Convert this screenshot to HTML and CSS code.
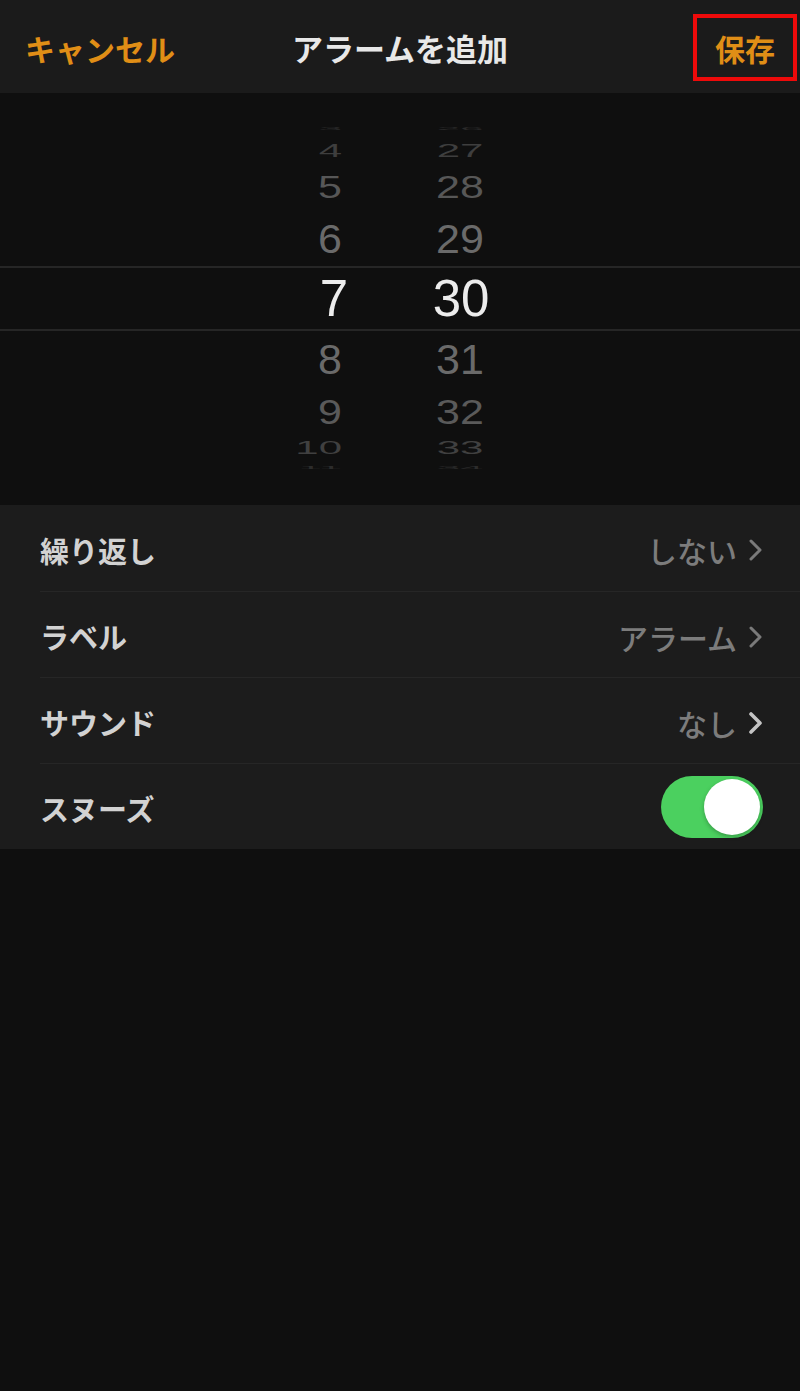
FILE: index.html
```html
<!DOCTYPE html>
<html lang="ja">
<head>
<meta charset="utf-8">
<title>アラームを追加</title>
<link rel="stylesheet" href="styles.css">
</head>
<body>
<header class="nav">
  <span class="nav-cancel">キャンセル</span>
  <span class="nav-title">アラームを追加</span>
  <span class="nav-save">保存</span>
</header>

<section class="picker">
  <div class="prow r0"><span class="h"><i>3</i></span><span class="m"><i>26</i></span></div>
  <div class="prow r1"><span class="h"><i>4</i></span><span class="m"><i>27</i></span></div>
  <div class="prow r2"><span class="h"><i>5</i></span><span class="m"><i>28</i></span></div>
  <div class="prow r3"><span class="h"><i>6</i></span><span class="m"><i>29</i></span></div>
  <div class="prow sel"><span class="h"><i>7</i></span><span class="m"><i>30</i></span></div>
  <div class="prow r5"><span class="h"><i>8</i></span><span class="m"><i>31</i></span></div>
  <div class="prow r6"><span class="h"><i>9</i></span><span class="m"><i>32</i></span></div>
  <div class="prow r7"><span class="h"><i>10</i></span><span class="m"><i>33</i></span></div>
  <div class="prow r8"><span class="h"><i>11</i></span><span class="m"><i>34</i></span></div>
</section>

<section class="list">
  <div class="row">
    <span class="label">繰り返し</span>
    <span class="value">しない<svg class="chev" width="14" height="22" viewBox="0 0 14 22"><polyline points="2,2 11,11 2,20" fill="none" stroke="currentColor" stroke-width="3" stroke-linecap="round" stroke-linejoin="round"/></svg></span>
  </div>
  <div class="row">
    <span class="label">ラベル</span>
    <span class="value">アラーム<svg class="chev" width="14" height="22" viewBox="0 0 14 22"><polyline points="2,2 11,11 2,20" fill="none" stroke="currentColor" stroke-width="3" stroke-linecap="round" stroke-linejoin="round"/></svg></span>
  </div>
  <div class="row">
    <span class="label">サウンド</span>
    <span class="value">なし<svg class="chev chev-strong" width="14" height="22" viewBox="0 0 14 22"><polyline points="2,2 11,11 2,20" fill="none" stroke="currentColor" stroke-width="3.6" stroke-linecap="round" stroke-linejoin="round"/></svg></span>
  </div>
  <div class="row">
    <span class="label">スヌーズ</span>
    <span class="toggle"><span class="knob"></span></span>
  </div>
</section>
</body>
</html>
```

FILE: styles.css
```css
html, body {
  margin: 0;
  padding: 0;
  background: #0f0f0f;
}
body {
  width: 800px;
  min-height: 1391px;
  font-family: "Noto Sans CJK JP", "Noto Sans", sans-serif;
  color: #e6e6e6;
}

/* header */
.nav {
  height: 93px;
  box-sizing: border-box;
  padding: 2px 3px 0 3px;
  background: #1b1b1b;
  display: grid;
  grid-template-columns: 1fr auto 1fr;
  align-items: center;
  font-size: 30px;
  font-weight: 700;
  line-height: 1;
}
.nav-cancel {
  justify-self: start;
  margin-left: 22px;
  color: #e08e16;
}
.nav-title {
  justify-self: center;
  color: #e8e8e8;
  font-size: 31px;
}
.nav-save {
  justify-self: end;
  color: #e08e16;
  border: 4px solid #ee0a0a;
  height: 67px;
  box-sizing: border-box;
  padding: 0 18px;
  display: flex;
  align-items: center;
}

/* picker */
.picker {
  height: 412px;
  box-sizing: border-box;
  padding-top: 25px;
  background: #0f0f0f;
  font-family: "Liberation Sans", Arial, sans-serif;
  overflow: hidden;
}
.prow {
  display: flex;
  align-items: center;
  box-sizing: border-box;
  font-size: 43px;
  line-height: 1;
}
.prow .h {
  width: 342px;
  text-align: right;
  flex: none;
}
.prow .m {
  width: 236px;
  text-align: center;
  flex: none;
}
.prow i {
  font-style: normal;
  display: inline-block;
}
.r0 { height: 21px; color: #2a2a2a; font-size: 42px; }
.r0 i { transform: scaleY(0.1); }
.r1 { height: 23px; color: #3e3e3e; font-size: 42px; }
.r1 i { transform: scaleY(0.45); }
.r2 { height: 50px; color: #575757; }
.r2 i { transform: scaleY(0.75); }
.r3 { height: 54px; color: #6a6a6a; }
.r3 i { transform: scaleY(0.95); }
.sel {
  height: 65px;
  border-top: 2px solid #262626;
  border-bottom: 2px solid #262626;
  color: #ececec;
  font-size: 51px;
}
.sel .h { width: 348px; }
.sel .m { width: 226px; }
.r5 { height: 57px; color: #6a6a6a; }
.r5 i { transform: scaleY(0.97); }
.r6 { height: 48px; color: #5a5a5a; }
.r6 i { transform: scaleY(0.8); }
.r7 { height: 24px; color: #404040; font-size: 42px; }
.r7 i { transform: scaleY(0.42); }
.r8 { height: 16px; color: #2c2c2c; font-size: 42px; }
.r8 i { transform: scaleY(0.08); }

/* list */
.list {
  background: #1c1c1c;
}
.row {
  height: 86px;
  box-sizing: border-box;
  margin-left: 40px;
  padding: 4px 37px 0 0;
  display: flex;
  align-items: center;
  justify-content: space-between;
  border-top: 1px solid #262626;
  font-size: 29px;
  line-height: 1;
}
.row:first-child {
  border-top: none;
}
.label {
  color: #d2d2d2;
  font-weight: 700;
}
.value {
  color: #7c7c7c;
  font-weight: 500;
  font-size: 30px;
  display: flex;
  align-items: center;
  gap: 12px;
}
.chev {
  color: #7a7a7a;
  display: block;
}
.chev-strong {
  color: #c4c4c4;
}
.toggle {
  width: 102px;
  height: 62px;
  border-radius: 31px;
  background: #4bd05f;
  display: flex;
  align-items: center;
  justify-content: flex-end;
  padding-right: 3px;
  box-sizing: border-box;
  margin-top: -4px;
}
.knob {
  width: 56px;
  height: 56px;
  border-radius: 50%;
  background: #ffffff;
  box-shadow: 0 2px 4px rgba(0,0,0,0.25);
}
```
